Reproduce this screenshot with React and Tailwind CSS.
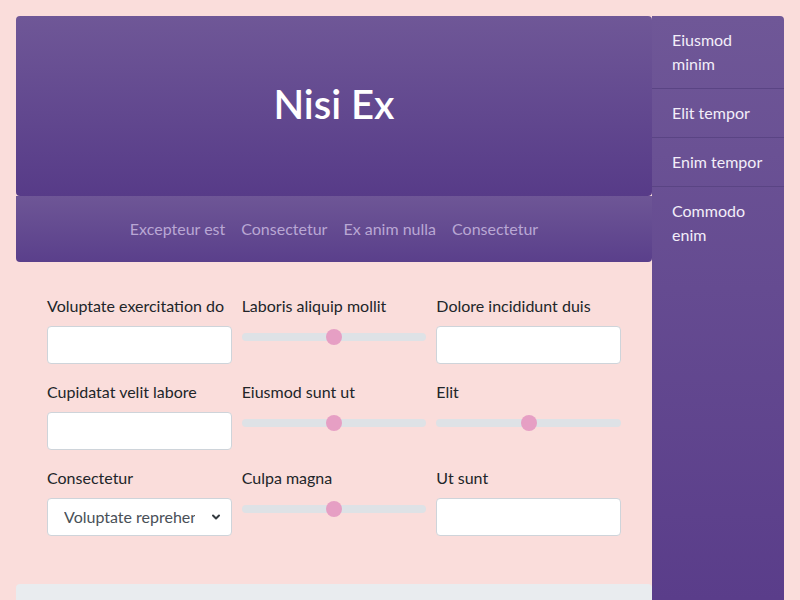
import { ChevronDown } from 'lucide-react';

const navLinks = ['Excepteur est', 'Consectetur', 'Ex anim nulla', 'Consectetur'];
const sideItems = ['Eiusmod minim', 'Elit tempor', 'Enim tempor', 'Commodo enim'];

const TextField = ({ label }) => (
    <div className="flex flex-col">
        <label className="mb-2 leading-6">{label}</label>
        <input
            type="text"
            className="h-[38px] w-full rounded border border-[#ced4da] bg-white px-3 outline-none"
        />
    </div>
);

const RangeField = ({ label }) => (
    <div className="flex flex-col">
        <label className="mb-2 leading-6">{label}</label>
        <div className="flex h-[22px] items-center">
            <input
                type="range"
                defaultValue={50}
                className="h-2 w-full cursor-pointer appearance-none rounded-full bg-[#dee2e6] outline-none [&::-webkit-slider-thumb]:h-4 [&::-webkit-slider-thumb]:w-4 [&::-webkit-slider-thumb]:appearance-none [&::-webkit-slider-thumb]:rounded-full [&::-webkit-slider-thumb]:border-0 [&::-webkit-slider-thumb]:bg-[#e69fc4]"
            />
        </div>
    </div>
);

const SelectField = ({ label }) => (
    <div className="flex flex-col">
        <label className="mb-2 leading-6">{label}</label>
        <div className="relative">
            <select className="h-[38px] w-full appearance-none rounded border border-[#ced4da] bg-white pl-4 pr-9 text-[#495057] outline-none">
                <option>Voluptate reprehenderit</option>
                <option>Lorem ipsum</option>
            </select>
            <ChevronDown
                className="pointer-events-none absolute right-[10px] top-1/2 h-3 w-3 -translate-y-1/2 text-[#343a40]"
                strokeWidth={4}
            />
        </div>
    </div>
);

export default function App() {
    return (
        <div
            className="flex h-[600px] overflow-hidden bg-[#fadddb] px-4 pt-4 text-base text-[#212529]"
            style={{ fontFamily: '"Lato", "Open Sans", sans-serif' }}
        >
            {/* Main column */}
            <div className="flex w-[636px] flex-col">
                {/* Header */}
                <header className="flex h-[180px] items-center justify-center rounded bg-gradient-to-b from-[#6f5797] to-[#573b88] pb-1">
                    <h1 className="text-[40px] font-semibold text-white">Nisi Ex</h1>
                </header>

                {/* Nav */}
                <nav className="flex h-[66px] items-center justify-center gap-4 rounded-b bg-gradient-to-b from-[#6e5696] to-[#5a3f8b]">
                    {navLinks.map((link, i) => (
                        <a key={i} href="#" className="text-[#b9a7d4]">
                            {link}
                        </a>
                    ))}
                </nav>

                {/* Form */}
                <div className="grid grid-cols-3 gap-x-[10px] gap-y-4 px-[31px] pb-12 pt-8">
                    <TextField label="Voluptate exercitation do" />
                    <RangeField label="Laboris aliquip mollit" />
                    <TextField label="Dolore incididunt duis" />
                    <TextField label="Cupidatat velit labore" />
                    <RangeField label="Eiusmod sunt ut" />
                    <RangeField label="Elit" />
                    <SelectField label="Consectetur" />
                    <RangeField label="Culpa magna" />
                    <TextField label="Ut sunt" />
                </div>

                {/* Footer panel */}
                <div className="flex-1 rounded-t bg-[#e9ecef]" />
            </div>

            {/* Sidebar */}
            <aside className="w-[132px] rounded-tr bg-gradient-to-b from-[#6f5797] to-[#5a3d8a]">
                {sideItems.map((item, i) => (
                    <div
                        key={i}
                        className={`px-5 py-3 leading-6 text-[#f3eef9] ${i < sideItems.length - 1 ? 'border-b border-[#5a4484]' : ''}`}
                    >
                        {item}
                    </div>
                ))}
            </aside>
        </div>
    );
}
